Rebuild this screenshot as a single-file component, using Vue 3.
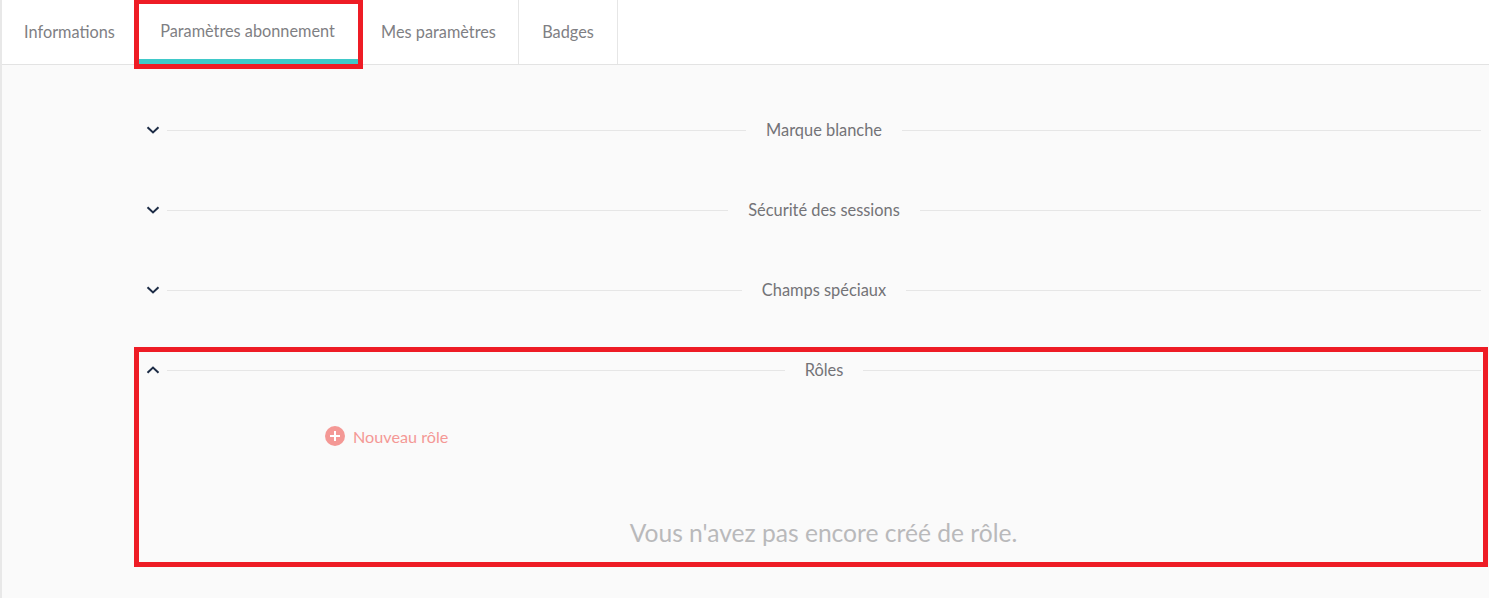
<script setup>
const tabs = [
  { label: 'Informations' },
  { label: 'Paramètres abonnement', active: true },
  { label: 'Mes paramètres' },
  { label: 'Badges' }
]
const sections = [
  { label: 'Marque blanche' },
  { label: 'Sécurité des sessions' },
  { label: 'Champs spéciaux' },
  { label: 'Rôles', open: true }
]
</script>

<template>
  <div class="page">
    <nav class="tabs">
      <div v-for="tab in tabs" :key="tab.label" class="tab" :class="{ active: tab.active }">
        {{ tab.label }}
      </div>
    </nav>

    <main class="content">
      <section v-for="s in sections" :key="s.label" class="section">
        <div class="section-head">
          <svg class="chevron" width="14" height="10" viewBox="0 0 14 10" fill="none">
            <path v-if="s.open" d="M1.5 7.8 7 2.6l5.5 5.2" stroke="#1c2b45" stroke-width="2" />
            <path v-else d="M1.5 2.2 7 7.4l5.5-5.2" stroke="#1c2b45" stroke-width="2" />
          </svg>
          <div class="rule">
            <span class="rule-label">{{ s.label }}</span>
          </div>
        </div>
        <div v-if="s.open" class="section-body">
          <button class="new-role">
            <svg width="20" height="20" viewBox="0 0 20 20">
              <circle cx="10" cy="10" r="10" fill="#f49895" />
              <path d="M10 5v10M5 10h10" stroke="#fff" stroke-width="2" />
            </svg>
            Nouveau rôle
          </button>
          <p class="empty">Vous n'avez pas encore créé de rôle.</p>
        </div>
      </section>
    </main>

    <div class="mark mark-tab" />
    <div class="mark mark-roles" />
  </div>
</template>

<style scoped>
.page {
  position: relative;
  height: 598px;
  overflow: hidden;
  background: #fafafa;
  border-left: 2px solid #e8e8e8;
  box-sizing: border-box;
  font-family: "Lato", "Liberation Sans", sans-serif;
}

.tabs {
  display: flex;
  height: 65px;
  box-sizing: border-box;
  background: #fff;
  border-bottom: 1px solid #e3e3e3;
}

.tab {
  display: flex;
  align-items: center;
  justify-content: center;
  box-sizing: border-box;
  padding-bottom: 2px;
  font-size: 16.3px;
  color: #7f7f84;
  border-right: 1px solid #e6e6e6;
}

.tab:nth-child(1) { width: 135px; border-right: 0; }
.tab:nth-child(2) { width: 222px; }
.tab:nth-child(3) { width: 160px; }
.tab:nth-child(4) { width: 99px; }

.tab.active {
  border-bottom: 5px solid #3fc9c9;
  padding-top: 2px;
  padding-bottom: 0;
  height: 64px;
  margin-bottom: -1px;
}

.content {
  padding: 25px 8px 0 144px;
}

.section-head {
  display: flex;
  align-items: center;
  height: 80px;
}

.chevron {
  flex: none;
  margin-right: 7px;
}

.rule {
  flex: 1;
  display: flex;
  justify-content: center;
  align-items: center;
  height: 1px;
  background: #e6e6e6;
}

.rule-label {
  padding: 0 20px;
  background: #fafafa;
  font-size: 16.4px;
  line-height: 20px;
  color: #737377;
}

.section-body {
  position: relative;
}

.new-role {
  display: flex;
  align-items: center;
  gap: 8px;
  margin: 16px 0 0 179px;
  padding: 0;
  border: 0;
  background: none;
  font: inherit;
  font-size: 16.2px;
  color: #f49895;
}

.empty {
  margin: 71px 0 0;
  padding-left: 20px;
  text-align: center;
  font-size: 24.6px;
  line-height: 32px;
  color: #b9b9bb;
}

.mark {
  position: absolute;
  box-sizing: border-box;
  border: 5px solid #ee1c25;
  pointer-events: none;
}

.mark-tab {
  left: 132px;
  top: -1px;
  width: 229px;
  height: 70px;
}

.mark-roles {
  left: 132px;
  top: 347px;
  width: 1354px;
  height: 220px;
}
</style>
